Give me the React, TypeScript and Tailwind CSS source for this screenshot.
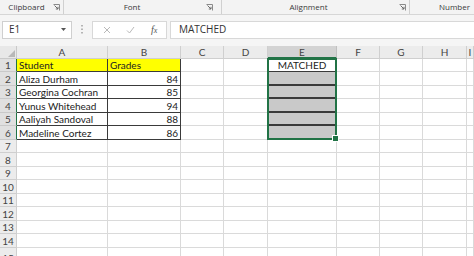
import React from "react";

const colNames = ["A", "B", "C", "D", "E", "F", "G", "H", "I"];
const rowHeights = [13, 14, 13, 14, 13, 14, 13, 14, 13, 14, 13, 14, 13, 14, 20];
const names = ["Student", "Aliza Durham", "Georgina Cochran", "Yunus Whitehead", "Aaliyah Sandoval", "Madeline Cortez"];
const grades = ["Grades", "84", "85", "94", "88", "86"];

function Launcher() {
  return (
    <svg width="7" height="7" viewBox="0 0 7 7" className="shrink-0">
      <path d="M0.5 0.5H6.5V6.5" fill="none" stroke="#8a8a8a" strokeWidth="1" />
      <path d="M1.5 1.5L5 5M5 2.8V5H2.8" fill="none" stroke="#6a6a6a" strokeWidth="1" />
    </svg>
  );
}

export default function App() {
  const font = { fontFamily: "Lato, 'Open Sans', sans-serif" };
  const ui = { fontFamily: "'Open Sans', sans-serif" };
  return (
    <div className="w-[474px] h-[256px] overflow-hidden bg-white flex flex-col" style={font}>
      {/* Ribbon group labels */}
      <div className="h-[15px] shrink-0 flex bg-[#f3f3f3] border-b border-[#d6d6d6] text-[8px] text-[#3a3a3a] whitespace-nowrap" style={ui}>
        <div className="w-[64px] shrink-0 flex items-center border-r border-[#d0d0d0] pr-[3px]">
          <div className="flex-1 text-center leading-none">Clipboard</div>
          <Launcher />
        </div>
        <div className="w-[158px] shrink-0 flex items-center border-r border-[#d0d0d0] pr-[8px]">
          <div className="flex-1 text-center leading-none pr-[6px]">Font</div>
          <Launcher />
        </div>
        <div className="w-[188px] shrink-0 flex items-center border-r border-[#d0d0d0] pr-[3px]">
          <div className="flex-1 text-center leading-none pr-[4px]">Alignment</div>
          <Launcher />
        </div>
        <div className="flex-1 flex items-center pl-[29px] leading-none">Number</div>
      </div>

      {/* Formula bar */}
      <div className="h-[31px] shrink-0 flex items-center bg-[#f5f5f5] pb-[2px]">
        <div className="ml-[2px] w-[70px] h-[18px] bg-white border border-[#cfcfcf] flex items-center pl-[6px] pr-[5px] text-[10px] text-[#333]">
          <span className="flex-1" style={ui}>E1</span>
          <svg width="5" height="3" viewBox="0 0 5 3"><path d="M0 0H5L2.5 3Z" fill="#555" /></svg>
        </div>
        <div className="w-[20px] flex justify-center">
          <svg width="2" height="9" viewBox="0 0 2 9">
            <rect x="0" y="0" width="2" height="1.5" fill="#b5b5b5" />
            <rect x="0" y="3.5" width="2" height="1.5" fill="#b5b5b5" />
            <rect x="0" y="7" width="2" height="1.5" fill="#b5b5b5" />
          </svg>
        </div>
        <div className="w-[75px] h-[18px] bg-white border border-[#d8d8d8] flex items-center">
          <div className="w-[24px] flex justify-center ml-[2px]">
            <svg width="8" height="8" viewBox="0 0 8 8"><path d="M1 1L7 7M7 1L1 7" stroke="#b9b9b9" strokeWidth="1" /></svg>
          </div>
          <div className="w-[24px] flex justify-center">
            <svg width="9" height="8" viewBox="0 0 9 8"><path d="M1 4.5L3.5 7L8 1" fill="none" stroke="#b9b9b9" strokeWidth="1" /></svg>
          </div>
          <div className="w-[24px] flex justify-center items-baseline text-[10px] italic text-[#555] leading-none" style={{ fontFamily: "'Liberation Serif', serif" }}>
            <span>f</span><span className="text-[8px]">x</span>
          </div>
        </div>
        <div className="ml-[3px] flex-1 h-[18px] bg-white border border-[#d8d8d8] border-r-0 flex items-center pl-[8px] text-[10px] text-[#333]" style={ui}>
          MATCHED
        </div>
      </div>

      {/* Sheet grid */}
      <div className="grid grid-cols-[17px_91px_73px_43px_44px_69px_43px_43px_44px_1fr] grid-rows-[13px_13px_14px_13px_14px_13px_14px_13px_14px_13px_14px_13px_14px_13px_14px_20px] text-[10px] text-[#222]">
        <div className="bg-[#e8e8e8] border-r border-b border-[#c9c9c9] relative">
          <svg width="7" height="7" viewBox="0 0 7 7" className="absolute right-[1px] bottom-[1px]"><path d="M7 0V7H0Z" fill="#b8b8b8" /></svg>
        </div>
        {colNames.map((c) => (
          <div
            key={c}
            className={
              c === "E"
                ? "bg-[#d3d3d3] border-r border-[#c0c0c0] border-b-2 border-b-[#217346] flex items-center justify-center text-[#444] leading-none"
                : "bg-[#ececec] border-r border-b border-[#cfcfcf] flex items-center justify-center text-[#444] leading-none"
            }
          >
            {c}
          </div>
        ))}
        {rowHeights.map((_, ri) => {
          const r = ri + 1;
          const inData = r <= 6;
          return (
            <React.Fragment key={r}>
              <div
                className={
                  inData
                    ? "bg-[#e0e0e0] border-b border-[#c9c9c9] border-r border-r-[#217346] flex items-center justify-center text-[#444] leading-none"
                    : "bg-[#ececec] border-b border-r border-[#cfcfcf] flex items-center justify-center text-[#444] leading-none"
                }
              >
                {r}
              </div>
              {colNames.map((c) => {
                if (inData && c === "A") {
                  return (
                    <div key={c} className={`${r === 1 ? "bg-[#ffff00]" : "bg-white"} border-r border-b border-[#3a3a3a] flex items-center pl-[2px] leading-none whitespace-nowrap overflow-hidden`}>
                      {names[ri]}
                    </div>
                  );
                }
                if (inData && c === "B") {
                  return (
                    <div key={c} className={`${r === 1 ? "bg-[#ffff00] justify-start pl-[2px]" : "bg-white justify-end pr-[2px]"} border-r border-b border-[#3a3a3a] flex items-center leading-none`}>
                      {grades[ri]}
                    </div>
                  );
                }
                if (inData && c === "E") {
                  if (r === 1) {
                    return (
                      <div key={c} className="bg-white border-r border-b border-[#3a3a3a] flex items-center justify-center leading-none relative">
                        MATCHED
                        <div className="absolute left-[-1px] top-[-1px] w-[70px] h-[82px] border-2 border-[#217346] pointer-events-none">
                          <div className="absolute right-[-4px] bottom-[-4px] w-[5px] h-[5px] bg-[#217346] border border-white box-content" />
                        </div>
                      </div>
                    );
                  }
                  return <div key={c} className="bg-[#c9c9c9] border-r border-b-2 border-[#3a3a3a]" />;
                }
                return <div key={c} className="bg-white border-r border-b border-[#dadada]" />;
              })}
            </React.Fragment>
          );
        })}
      </div>
    </div>
  );
}
